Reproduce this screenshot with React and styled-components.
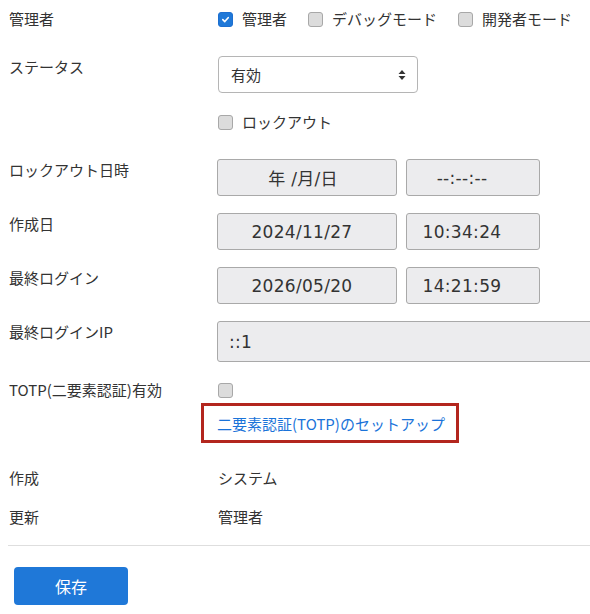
import styled, { createGlobalStyle } from "styled-components";

const GlobalStyle = createGlobalStyle`
  body {
    margin: 0;
    background: #fff;
    font-family: "Noto Sans CJK JP", "Noto Sans", sans-serif;
    font-size: 15px;
    color: #333;
  }
`;

const Form = styled.form`
  padding: 8px 0 0 8px;
  width: 582px;
  overflow: hidden;
`;

const Row = styled.div`
  display: grid;
  grid-template-columns: 209px 1fr;
  margin-bottom: ${(p) => p.$mb ?? 17}px;
`;

const Label = styled.div`
  line-height: 22px;
  padding-left: 1px;
`;

const Value = styled.div`
  display: flex;
  flex-direction: column;
  align-items: flex-start;
  gap: ${(p) => p.$gap ?? 0}px;
  min-width: 0;
`;

const CheckGroup = styled.div`
  display: flex;
  align-items: center;
  gap: 20px;
  min-height: 22px;
  line-height: 22px;
`;

const CheckLabel = styled.label`
  display: flex;
  align-items: center;
  gap: 9px;
`;

const Box = styled.span`
  box-sizing: border-box;
  width: 15px;
  height: 15px;
  border-radius: 3px;
  border: 1px solid ${(p) => (p.$checked ? "#1d6fd0" : "#a8a8a8")};
  background: ${(p) => (p.$checked ? "#1f78d8" : "#dcdcdc")};
  display: inline-flex;
  align-items: center;
  justify-content: center;
  margin-left: 1px;
`;

const Select = styled.div`
  box-sizing: border-box;
  width: 200px;
  height: 37px;
  border: 1px solid #b5b5b5;
  border-radius: 4px;
  display: flex;
  align-items: center;
  justify-content: space-between;
  padding: 0 11px 0 12px;
  margin-left: 1px;
`;

const Input = styled.div`
  box-sizing: border-box;
  height: ${(p) => p.$h ?? 37}px;
  width: ${(p) => p.$w}px;
  background: #ececee;
  border: 1px solid #a9a9a9;
  border-radius: 3px;
  display: flex;
  align-items: center;
  justify-content: ${(p) => (p.$left ? "flex-start" : "center")};
  padding: ${(p) => (p.$left ? "0 0 0 11px" : `0 ${p.$shift ?? 0}px 0 0`)};
  color: #333;
  font-size: 17px;
  letter-spacing: 0.3px;
  font-family: "DejaVu Sans", "Noto Sans CJK JP", sans-serif;
  white-space: nowrap;
`;

const InputPair = styled.div`
  display: flex;
  gap: 9px;
`;

const Highlight = styled.div`
  border: 3px solid #b3261e;
  margin: 2px 0 0 -16px;
  padding: 7px 11px 6px 13px;
`;

const SetupLink = styled.a`
  color: #1a73d9;
  text-decoration: none;
  line-height: 21px;
`;

const Divider = styled.hr`
  border: 0;
  border-top: 1px solid #dedede;
  margin: 0 0 21px;
`;

const SaveButton = styled.button`
  width: 114px;
  height: 38px;
  margin-left: 6px;
  border: 0;
  border-radius: 4px;
  background: #1f78d8;
  color: #fff;
  font-family: "Noto Sans CJK JP", sans-serif;
  font-size: 16px;
`;

function Checkbox({ checked, children }) {
  return (
    <CheckLabel>
      <Box $checked={checked}>
        {checked && (
          <svg width="9" height="9" viewBox="0 0 10 10">
            <path d="M2 5.2 L4.2 7.3 L8 3" stroke="#fff" strokeWidth="1.8" fill="none" strokeLinecap="round" strokeLinejoin="round" />
          </svg>
        )}
      </Box>
      {children}
    </CheckLabel>
  );
}

export default function App() {
  return (
    <>
      <GlobalStyle />
      <Form>
        <Row $mb={26}>
          <Label>管理者</Label>
          <Value>
            <CheckGroup>
              <Checkbox checked>管理者</Checkbox>
              <Checkbox>デバッグモード</Checkbox>
              <Checkbox>開発者モード</Checkbox>
            </CheckGroup>
          </Value>
        </Row>
        <Row $mb={26}>
          <Label>ステータス</Label>
          <Value $gap={18}>
            <Select>
              <span>有効</span>
              <svg width="8" height="12" viewBox="0 0 8 12">
                <path d="M4 1 L7.5 5 H0.5 Z M4 11 L7.5 7 H0.5 Z" fill="#333" />
              </svg>
            </Select>
            <CheckGroup>
              <Checkbox>ロックアウト</Checkbox>
            </CheckGroup>
          </Value>
        </Row>
        <Row>
          <Label>ロックアウト日時</Label>
          <InputPair>
            <Input $w={180} $shift={8}>年 /月/日</Input>
            <Input $w={134} $shift={22}>--:--:--</Input>
          </InputPair>
        </Row>
        <Row>
          <Label>作成日</Label>
          <InputPair>
            <Input $w={180} $shift={10}>2024/11/27</Input>
            <Input $w={134} $shift={22}>10:34:24</Input>
          </InputPair>
        </Row>
        <Row>
          <Label>最終ログイン</Label>
          <InputPair>
            <Input $w={180} $shift={10}>2026/05/20</Input>
            <Input $w={134} $shift={22}>14:21:59</Input>
          </InputPair>
        </Row>
        <Row>
          <Label>最終ログインIP</Label>
          <Input $w={400} $h={41} $left>::1</Input>
        </Row>
        <Row $mb={24}>
          <Label>TOTP(二要素認証)有効</Label>
          <Value>
            <CheckGroup>
              <Checkbox />
            </CheckGroup>
            <Highlight>
              <SetupLink href="#">二要素認証(TOTP)のセットアップ</SetupLink>
            </Highlight>
          </Value>
        </Row>
        <Row>
          <Label>作成</Label>
          <Label>システム</Label>
        </Row>
        <Row>
          <Label>更新</Label>
          <Label>管理者</Label>
        </Row>
        <Divider />
        <SaveButton type="button">保存</SaveButton>
      </Form>
    </>
  );
}
